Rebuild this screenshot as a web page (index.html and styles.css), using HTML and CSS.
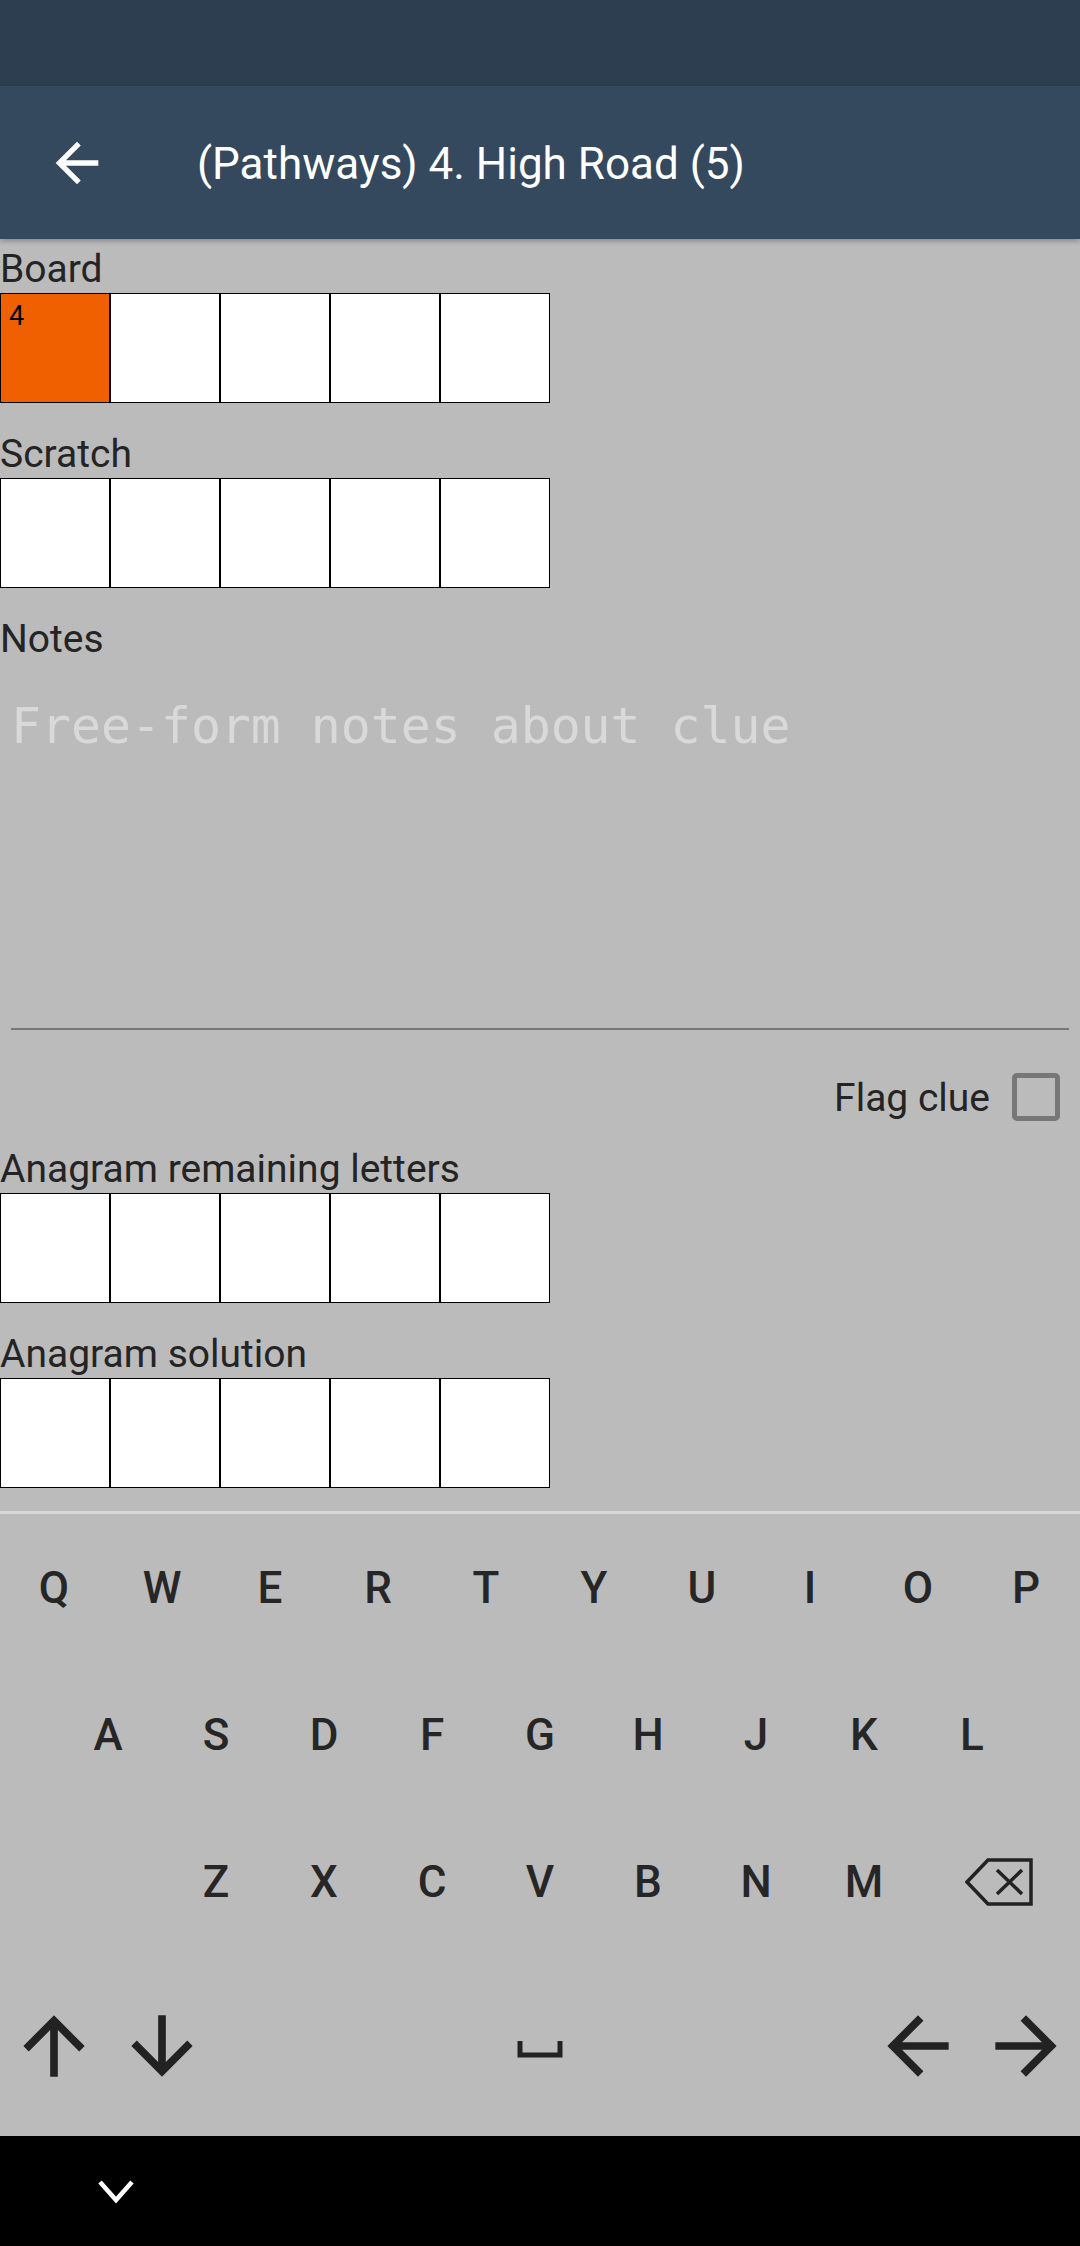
FILE: index.html
```html
<!DOCTYPE html>
<html>
<head>
<meta charset="utf-8">
<link rel="stylesheet" href="styles.css">
</head>
<body>
<div class="screen">
  <div class="status"></div>
  <header class="appbar">
    <svg class="back" viewBox="0 0 24 24"><path d="M20 11H7.83l5.59-5.59L12 4l-8 8 8 8 1.41-1.41L7.83 13H20v-2z" fill="#fff"/></svg>
    <div class="title">(Pathways) 4. High Road (5)</div>
  </header>
  <main class="content">
    <section class="group first">
      <div class="label">Board</div>
      <div class="cells">
        <div class="cell active"><span class="num">4</span></div>
        <div class="cell"></div><div class="cell"></div><div class="cell"></div><div class="cell"></div>
      </div>
    </section>
    <section class="group">
      <div class="label">Scratch</div>
      <div class="cells">
        <div class="cell"></div><div class="cell"></div><div class="cell"></div><div class="cell"></div><div class="cell"></div>
      </div>
    </section>
    <section class="group">
      <div class="label">Notes</div>
      <div class="notes"><div class="placeholder">Free-form notes about clue</div></div>
    </section>
    <div class="flag-row">
      <span class="flag-text">Flag clue</span>
      <span class="checkbox"></span>
    </div>
    <section class="group flush">
      <div class="label">Anagram remaining letters</div>
      <div class="cells">
        <div class="cell"></div><div class="cell"></div><div class="cell"></div><div class="cell"></div><div class="cell"></div>
      </div>
    </section>
    <section class="group">
      <div class="label">Anagram solution</div>
      <div class="cells">
        <div class="cell"></div><div class="cell"></div><div class="cell"></div><div class="cell"></div><div class="cell"></div>
      </div>
    </section>
  </main>
  <div class="keyboard">
    <div class="kb-row r1">
      <div class="key">Q</div><div class="key">W</div><div class="key">E</div><div class="key">R</div><div class="key">T</div><div class="key">Y</div><div class="key">U</div><div class="key">I</div><div class="key">O</div><div class="key">P</div>
    </div>
    <div class="kb-row row2">
      <div class="key">A</div><div class="key">S</div><div class="key">D</div><div class="key">F</div><div class="key">G</div><div class="key">H</div><div class="key">J</div><div class="key">K</div><div class="key">L</div>
    </div>
    <div class="kb-row r3">
      <div class="key wide"></div>
      <div class="key">Z</div><div class="key">X</div><div class="key">C</div><div class="key">V</div><div class="key">B</div><div class="key">N</div><div class="key">M</div>
      <div class="key wide">
        <svg class="bksp" viewBox="0 0 68 48"><path d="M23 2H66V46H23L2 24Z" fill="none" stroke="#222" stroke-width="3.5" stroke-linejoin="miter"/><path d="M32 12L57 36M57 12L32 36" stroke="#222" stroke-width="3.5"/></svg>
      </div>
    </div>
    <div class="kb-row last">
      <div class="key"><svg class="arrow" viewBox="0 0 24 24"><path d="M4 12l1.41 1.41L11 7.83V20h2V7.83l5.58 5.59L20 12l-8-8-8 8z" fill="#222"/></svg></div>
      <div class="key"><svg class="arrow" viewBox="0 0 24 24"><path d="M20 12l-1.41-1.41L13 16.170V4h-2v12.17l-5.58-5.59L4 12l8 8 8-8z" fill="#222"/></svg></div>
      <div class="key space"><svg class="spc" viewBox="0 0 48 20"><path d="M4 2V16H44V2" fill="none" stroke="#222" stroke-width="5"/></svg></div>
      <div class="key"><svg class="arrow" viewBox="0 0 24 24"><path d="M20 11H7.83l5.59-5.59L12 4l-8 8 8 8 1.41-1.41L7.83 13H20v-2z" fill="#222"/></svg></div>
      <div class="key"><svg class="arrow" viewBox="0 0 24 24"><path d="M12 4l-1.41 1.41L16.17 11H4v2h12.17l-5.58 5.59L12 20l8-8z" fill="#222"/></svg></div>
    </div>
  </div>
  <div class="navbar">
    <svg class="chev" viewBox="0 0 40 26"><path d="M4 4L20 22L36 4" fill="none" stroke="#fff" stroke-width="4.5"/></svg>
  </div>
</div>
</body>
</html>
```
FILE: styles.css
```css
html, body {
  margin: 0;
  padding: 0;
}
body {
  background: #bbbbbb;
  font-family: Roboto, "Noto Sans", sans-serif;
  color: #242424;
}
.screen {
  width: 1080px;
  height: 2246px;
  display: flex;
  flex-direction: column;
  overflow: hidden;
  background: #bbbbbb;
}
.status {
  height: 86px;
  background: #2c3e50;
  flex: none;
}
.appbar {
  height: 153px;
  flex: none;
  background: #34495e;
  display: flex;
  align-items: center;
  box-shadow: 0 2px 5px rgba(0, 0, 0, 0.28);
  position: relative;
  z-index: 1;
}
.back {
  width: 64px;
  height: 64px;
  margin-left: 45px;
  flex: none;
}
.title {
  margin-left: 88px;
  margin-top: 2px;
  color: #fff;
  font-size: 44px;
  line-height: 54px;
  white-space: nowrap;
}
.content {
  flex: none;
  height: 1272px;
}
.group {
  margin-top: 21px;
}
.group.first,
.group.flush {
  margin-top: 0;
}
.label {
  font-size: 39px;
  line-height: 48px;
  padding-top: 6px;
  color: #242424;
  white-space: nowrap;
}
.cells {
  display: flex;
}
.cell {
  width: 108px;
  height: 108px;
  border: 1px solid #000;
  background: #fff;
  position: relative;
}
.cell.active {
  background: #f06000;
}
.num {
  position: absolute;
  left: 8px;
  top: 6px;
  font-size: 27px;
  line-height: 32px;
  color: #000;
}
.notes {
  margin: 0 11px;
  height: 367px;
  border-bottom: 2px solid #777;
  box-sizing: border-box;
  padding-top: 33px;
}
.placeholder {
  font-family: "DejaVu Sans Mono", "Liberation Mono", monospace;
  font-size: 49.8px;
  line-height: 60px;
  color: #d9d9d9;
  white-space: nowrap;
}
.flag-row {
  display: flex;
  justify-content: flex-end;
  align-items: center;
  height: 50px;
  margin-top: 42px;
  margin-bottom: 17px;
  padding-right: 20px;
}
.flag-text {
  font-size: 39px;
  line-height: 48px;
  color: #242424;
  margin-right: 22px;
  margin-top: 2px;
}
.checkbox {
  width: 48px;
  height: 48px;
  box-sizing: border-box;
  border: 5px solid #777;
  border-radius: 5px;
}
.keyboard {
  flex: none;
  height: 622px;
  border-top: 3px solid #d8d8d8;
  display: flex;
  flex-direction: column;
}
.kb-row {
  height: 147px;
  display: flex;
}
.kb-row.row2 {
  padding-left: 54px;
}
.kb-row.r3 {
  height: 148px;
}
.kb-row.last {
  height: 180px;
}
.key {
  width: 108px;
  flex: none;
  display: flex;
  align-items: center;
  justify-content: center;
  font-size: 44px;
  font-weight: 500;
  color: #262626;
}
.key.wide {
  width: 162px;
}
.key.space {
  width: 648px;
}
.arrow {
  width: 92px;
  height: 92px;
}
.bksp {
  width: 68px;
  height: 48px;
}
.spc {
  width: 48px;
  height: 20px;
  margin-top: 6px;
}
.navbar {
  flex: none;
  height: 110px;
  background: #000;
  display: flex;
  align-items: center;
}
.chev {
  width: 40px;
  height: 26px;
  margin-left: 96px;
}
```
